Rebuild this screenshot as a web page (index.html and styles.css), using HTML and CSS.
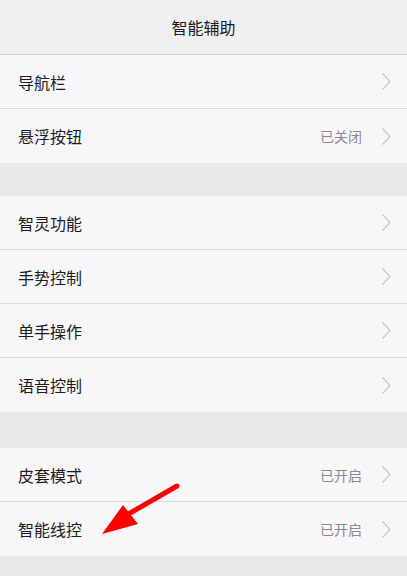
FILE: index.html
```html
<!DOCTYPE html>
<html lang="zh">
<head>
<meta charset="utf-8">
<link rel="stylesheet" href="styles.css">
</head>
<body>
<div class="page">
  <header class="header">智能辅助</header>
  <section class="group first">
    <div class="row"><span class="label">导航栏</span><svg class="chev" width="9" height="17" viewBox="0 0 9 17"><polyline points="0.5,0.5 8,8.5 0.5,16.5" fill="none" stroke="#c4c4c8" stroke-width="1.1"/></svg></div>
    <div class="row"><span class="label">悬浮按钮</span><span class="value">已关闭</span><svg class="chev" width="9" height="17" viewBox="0 0 9 17"><polyline points="0.5,0.5 8,8.5 0.5,16.5" fill="none" stroke="#c4c4c8" stroke-width="1.1"/></svg></div>
  </section>
  <section class="group">
    <div class="row"><span class="label">智灵功能</span><svg class="chev" width="9" height="17" viewBox="0 0 9 17"><polyline points="0.5,0.5 8,8.5 0.5,16.5" fill="none" stroke="#c4c4c8" stroke-width="1.1"/></svg></div>
    <div class="row"><span class="label">手势控制</span><svg class="chev" width="9" height="17" viewBox="0 0 9 17"><polyline points="0.5,0.5 8,8.5 0.5,16.5" fill="none" stroke="#c4c4c8" stroke-width="1.1"/></svg></div>
    <div class="row"><span class="label">单手操作</span><svg class="chev" width="9" height="17" viewBox="0 0 9 17"><polyline points="0.5,0.5 8,8.5 0.5,16.5" fill="none" stroke="#c4c4c8" stroke-width="1.1"/></svg></div>
    <div class="row"><span class="label">语音控制</span><svg class="chev" width="9" height="17" viewBox="0 0 9 17"><polyline points="0.5,0.5 8,8.5 0.5,16.5" fill="none" stroke="#c4c4c8" stroke-width="1.1"/></svg></div>
  </section>
  <section class="group third">
    <div class="row"><span class="label">皮套模式</span><span class="value">已开启</span><svg class="chev" width="9" height="17" viewBox="0 0 9 17"><polyline points="0.5,0.5 8,8.5 0.5,16.5" fill="none" stroke="#c4c4c8" stroke-width="1.1"/></svg></div>
    <div class="row"><span class="label">智能线控</span><span class="value">已开启</span><svg class="chev" width="9" height="17" viewBox="0 0 9 17"><polyline points="0.5,0.5 8,8.5 0.5,16.5" fill="none" stroke="#c4c4c8" stroke-width="1.1"/></svg></div>
  </section>
  <svg class="arrow" width="407" height="576" viewBox="0 0 407 576">
    <line x1="177" y1="486" x2="125" y2="516" stroke="#ff0000" stroke-width="5" stroke-linecap="round"/>
    <polygon points="102,534 123,505 138,524" fill="#ff0000"/>
  </svg>
</div>
</body>
</html>
```
FILE: styles.css
```css
* { box-sizing: border-box; }
html, body { margin: 0; padding: 0; }
body {
  background: #e9e8eb;
  font-family: "Noto Sans CJK SC", "Noto Sans", sans-serif;
  width: 407px;
  height: 576px;
  overflow: hidden;
}
.page { position: relative; width: 407px; height: 576px; }
.header {
  height: 55px;
  background: #efeef1;
  border-bottom: 1px solid #d3d2d5;
  display: flex;
  align-items: center;
  justify-content: center;
  font-size: 16px;
  color: #1a1a1a;
  padding-bottom: 1px;
}
.group { margin-top: 33px; background: #f7f6f9; }
.group.first { margin-top: 0; }
.group.third { margin-top: 36px; }
.row {
  height: 54px;
  display: flex;
  align-items: center;
  padding: 0 16px 0 18px;
  border-bottom: 1px solid #d9d8db;
}
.group .row:last-child { border-bottom: none; }
.label { flex: 1; font-size: 16px; color: #1c1c1c; }
.value { font-size: 14px; color: #8a8a8c; margin-right: 20px; }
.chev { display: block; flex: none; }
.arrow { position: absolute; left: 0; top: 0; pointer-events: none; }
```
